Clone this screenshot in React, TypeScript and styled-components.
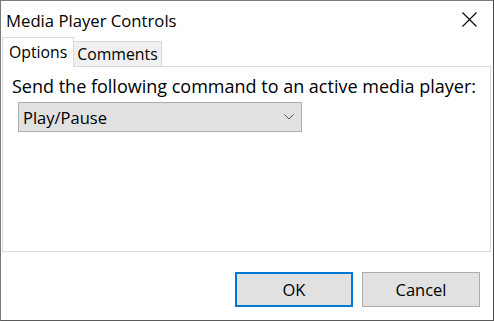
import styled, { createGlobalStyle } from "styled-components";

const Global = createGlobalStyle`
  html, body { margin: 0; padding: 0; background: #ffffff; }
  body { font-family: "Open Sans", "Noto Sans", sans-serif; }
`;

const Window = styled.div`
  width: 494px;
  height: 321px;
  box-sizing: border-box;
  border: 1px solid #7a7a7a;
  border-right-color: #4a4a4a;
  border-bottom-color: #5a5a5a;
  background: #ffffff;
  display: flex;
  flex-direction: column;
  color: #000;
`;

const TitleBar = styled.div`
  height: 36px;
  display: flex;
  align-items: center;
  justify-content: space-between;
  padding-left: 5px;
  padding-right: 16px;
`;

const Title = styled.span`
  font-size: 16.7px;
  padding-top: 2px;
`;

const Close = styled.svg`
  width: 15px;
  height: 15px;
`;

const Body = styled.div`
  padding: 0 2px 0 1px;
  display: flex;
  flex-direction: column;
`;

const TabRow = styled.div`
  display: flex;
  align-items: flex-end;
  height: 29px;
  position: relative;
  z-index: 1;
`;

const Tab = styled.div<{ active?: boolean }>`
  box-sizing: border-box;
  height: ${({ active }) => (active ? "30px" : "26px")};
  padding: 0 ${({ active }) => (active ? "6px" : "3px")};
  border: 1px solid #d9d9d9;
  border-bottom: ${({ active }) => (active ? "1px solid #fff" : "1px solid #d9d9d9")};
  background: ${({ active }) => (active ? "#ffffff" : "#f0f0f0")};
  margin-left: ${({ active }) => (active ? "0" : "-1px")};
  font-size: 15.8px;
  display: flex;
  align-items: center;
  margin-bottom: -1px;
`;

const Panel = styled.div`
  box-sizing: border-box;
  height: 186px;
  border: 1px solid #d9d9d9;
  padding: 9px 9px;
  display: flex;
  flex-direction: column;
  gap: 5px;
`;

const Label = styled.div`
  font-size: 18px;
  line-height: 21px;
  white-space: nowrap;
`;

const Combo = styled.div`
  box-sizing: border-box;
  width: 284px;
  height: 30px;
  margin-left: 6px;
  background: #e1e1e1;
  border: 1px solid #adadad;
  display: flex;
  align-items: center;
  justify-content: space-between;
  padding: 0 7px 0 4px;
  font-size: 16.5px;
`;

const Chevron = styled.svg`
  width: 10px;
  height: 6px;
`;

const Footer = styled.div`
  display: flex;
  justify-content: flex-end;
  gap: 9px;
  padding: 20px 11px 0 0;
`;

const Button = styled.button<{ primary?: boolean }>`
  box-sizing: border-box;
  width: 118px;
  height: 35px;
  background: #e1e1e1;
  border: ${({ primary }) => (primary ? "2px solid #0078d7" : "1px solid #adadad")};
  font-family: "Open Sans", "Noto Sans", sans-serif;
  font-size: 16.5px;
  color: #000;
  padding: 0;
`;

export default function App() {
  return (
    <>
      <Global />
      <Window>
        <TitleBar>
          <Title>Media Player Controls</Title>
          <Close viewBox="0 0 15 15">
            <path d="M0.5 0.5 L14.5 14.5 M14.5 0.5 L0.5 14.5" stroke="#000" strokeWidth="1.1" fill="none" />
          </Close>
        </TitleBar>
        <Body>
          <TabRow>
            <Tab active>Options</Tab>
            <Tab>Comments</Tab>
          </TabRow>
          <Panel>
            <Label>Send the following command to an active media player:</Label>
            <Combo>
              <span>Play/Pause</span>
              <Chevron viewBox="0 0 10 6">
                <path d="M0.5 0.5 L5 5 L9.5 0.5" stroke="#555" strokeWidth="1" fill="none" />
              </Chevron>
            </Combo>
          </Panel>
          <Footer>
            <Button primary>OK</Button>
            <Button>Cancel</Button>
          </Footer>
        </Body>
      </Window>
    </>
  );
}
